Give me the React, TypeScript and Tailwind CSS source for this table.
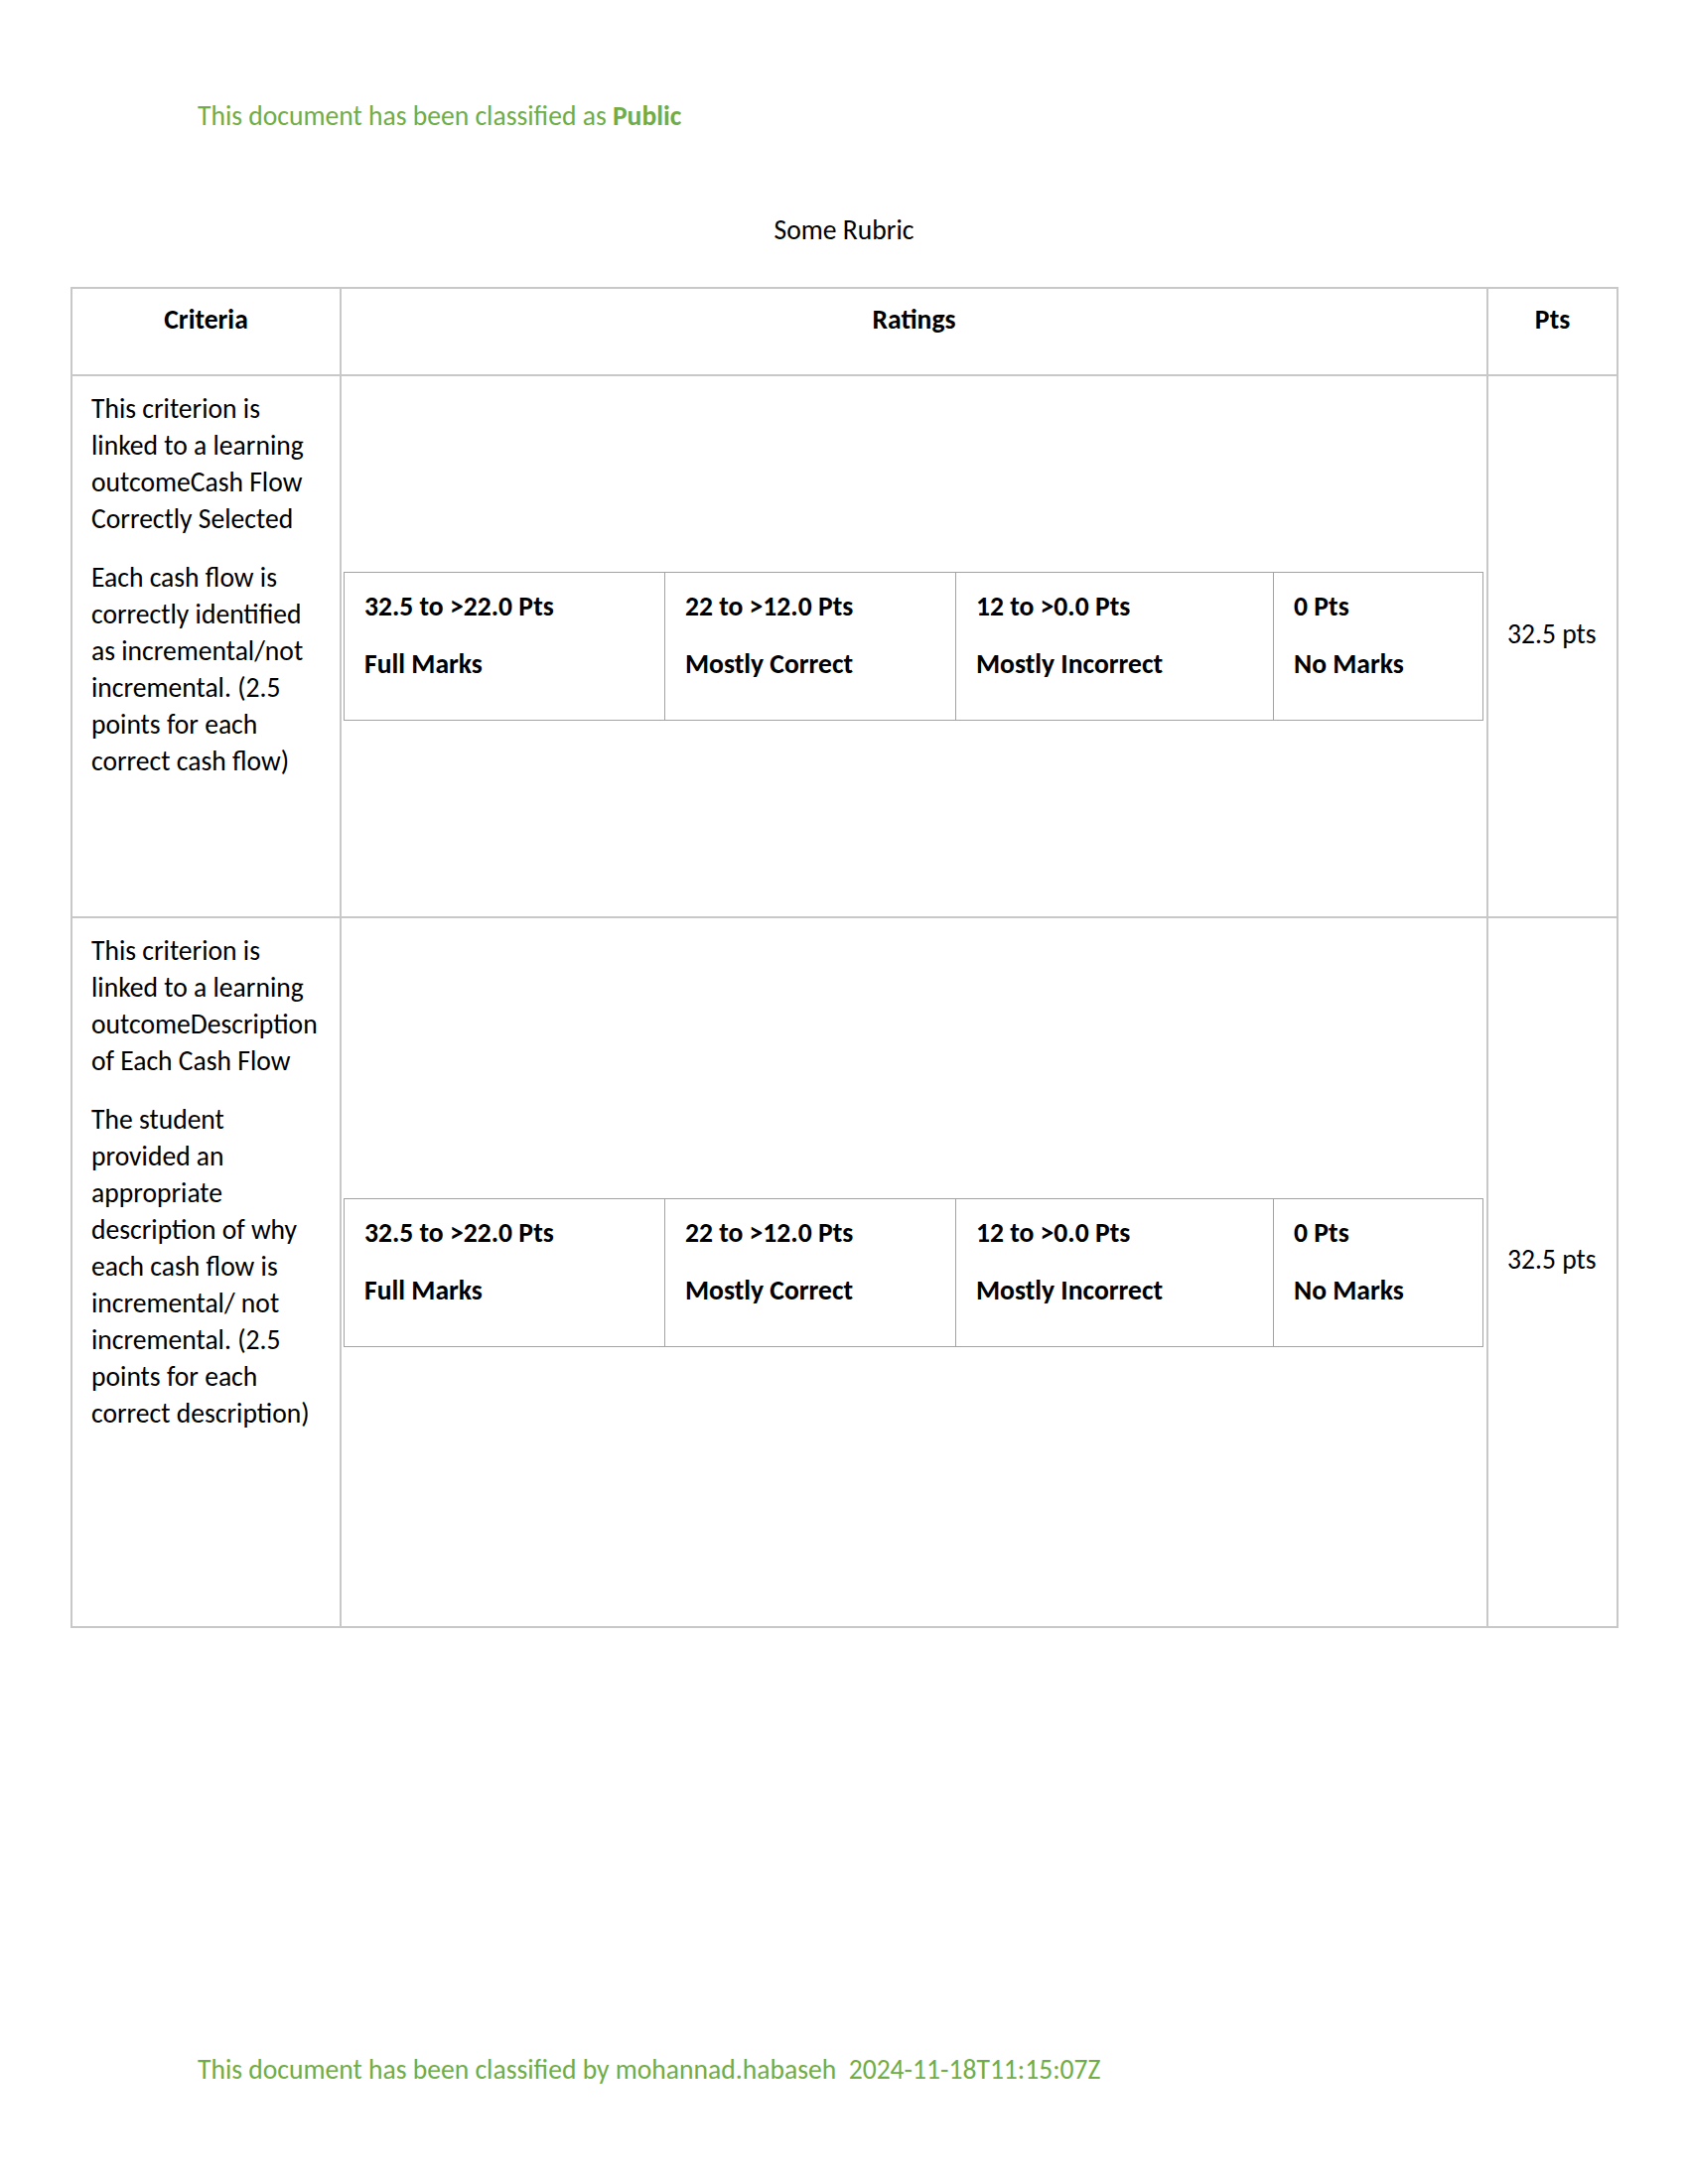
import React from "react";

const font = { fontFamily: "Carlito, Calibri, Lato, 'Liberation Sans', sans-serif" };

function Ratings() {
  const cells = [
    { pts: "32.5 to >22.0 Pts", label: "Full Marks", w: "w-[323px]" },
    { pts: "22 to >12.0 Pts", label: "Mostly Correct", w: "w-[293px]" },
    { pts: "12 to >0.0 Pts", label: "Mostly Incorrect", w: "w-[320px]" },
    { pts: "0 Pts", label: "No Marks", w: "w-[211px]" },
  ];
  return (
    <table className="w-[1147px] table-fixed border-collapse">
      <tbody>
        <tr className="h-[149px]">
          {cells.map((c) => (
            <td
              key={c.pts}
              className={`${c.w} border border-[#a3a3a3] pl-[20px] pt-[15px] align-top font-bold`}
            >
              <div>{c.pts}</div>
              <div className="mt-[21px]">{c.label}</div>
            </td>
          ))}
        </tr>
      </tbody>
    </table>
  );
}

export default function App() {
  return (
    <div
      className="w-[1700px] h-[2200px] bg-white text-black text-[27.6px] leading-[37px]"
      style={font}
    >
      <div className="pt-[98px] pl-[199px] text-[#70ad47]">
        This document has been classified as <span className="font-bold">Public</span>
      </div>
      <div className="mt-[78px] text-center">Some Rubric</div>
      <div className="mt-[39px] ml-[71px]">
        <table className="w-[1557px] table-fixed border-collapse">
          <colgroup>
            <col className="w-[271px]" />
            <col className="w-[1155px]" />
            <col className="w-[131px]" />
          </colgroup>
          <thead>
            <tr className="h-[88px]">
              <th className="border-2 border-[#c8c8c8] pt-[12px] align-top font-bold">Criteria</th>
              <th className="border-2 border-[#c8c8c8] pt-[12px] align-top font-bold">Ratings</th>
              <th className="border-2 border-[#c8c8c8] pt-[12px] align-top font-bold">Pts</th>
            </tr>
          </thead>
          <tbody>
            <tr className="h-[546px]">
              <td className="border-2 border-[#c8c8c8] pl-[19px] pr-[4px] pt-[14px] align-top">
                <p>
                  This criterion is
                  <br />
                  linked to a learning
                  <br />
                  outcomeCash Flow
                  <br />
                  Correctly Selected
                </p>
                <p className="mt-[22px]">
                  Each cash flow is
                  <br />
                  correctly identified
                  <br />
                  as incremental/not
                  <br />
                  incremental. (2.5
                  <br />
                  points for each
                  <br />
                  correct cash flow)
                </p>
              </td>
              <td className="border-2 border-[#c8c8c8] px-[2px] align-middle">
                <Ratings />
              </td>
              <td className="border-2 border-[#c8c8c8] pl-[19px] align-middle">
                <p className="mb-[26px]">32.5 pts</p>
              </td>
            </tr>
            <tr className="h-[715px]">
              <td className="border-2 border-[#c8c8c8] pl-[19px] pr-[4px] pt-[14px] align-top">
                <p>
                  This criterion is
                  <br />
                  linked to a learning
                  <br />
                  outcomeDescription
                  <br />
                  of Each Cash Flow
                </p>
                <p className="mt-[22px]">
                  The student
                  <br />
                  provided an
                  <br />
                  appropriate
                  <br />
                  description of why
                  <br />
                  each cash flow is
                  <br />
                  incremental/ not
                  <br />
                  incremental. (2.5
                  <br />
                  points for each
                  <br />
                  correct description)
                </p>
              </td>
              <td className="border-2 border-[#c8c8c8] px-[2px] align-middle">
                <Ratings />
              </td>
              <td className="border-2 border-[#c8c8c8] pl-[19px] align-middle">
                <p className="mb-[26px]">32.5 pts</p>
              </td>
            </tr>
          </tbody>
        </table>
      </div>
      <div className="mt-[426px] pl-[199px] text-[#70ad47] whitespace-pre">
        {"This document has been classified by mohannad.habaseh  2024-11-18T11:15:07Z"}
      </div>
    </div>
  );
}
